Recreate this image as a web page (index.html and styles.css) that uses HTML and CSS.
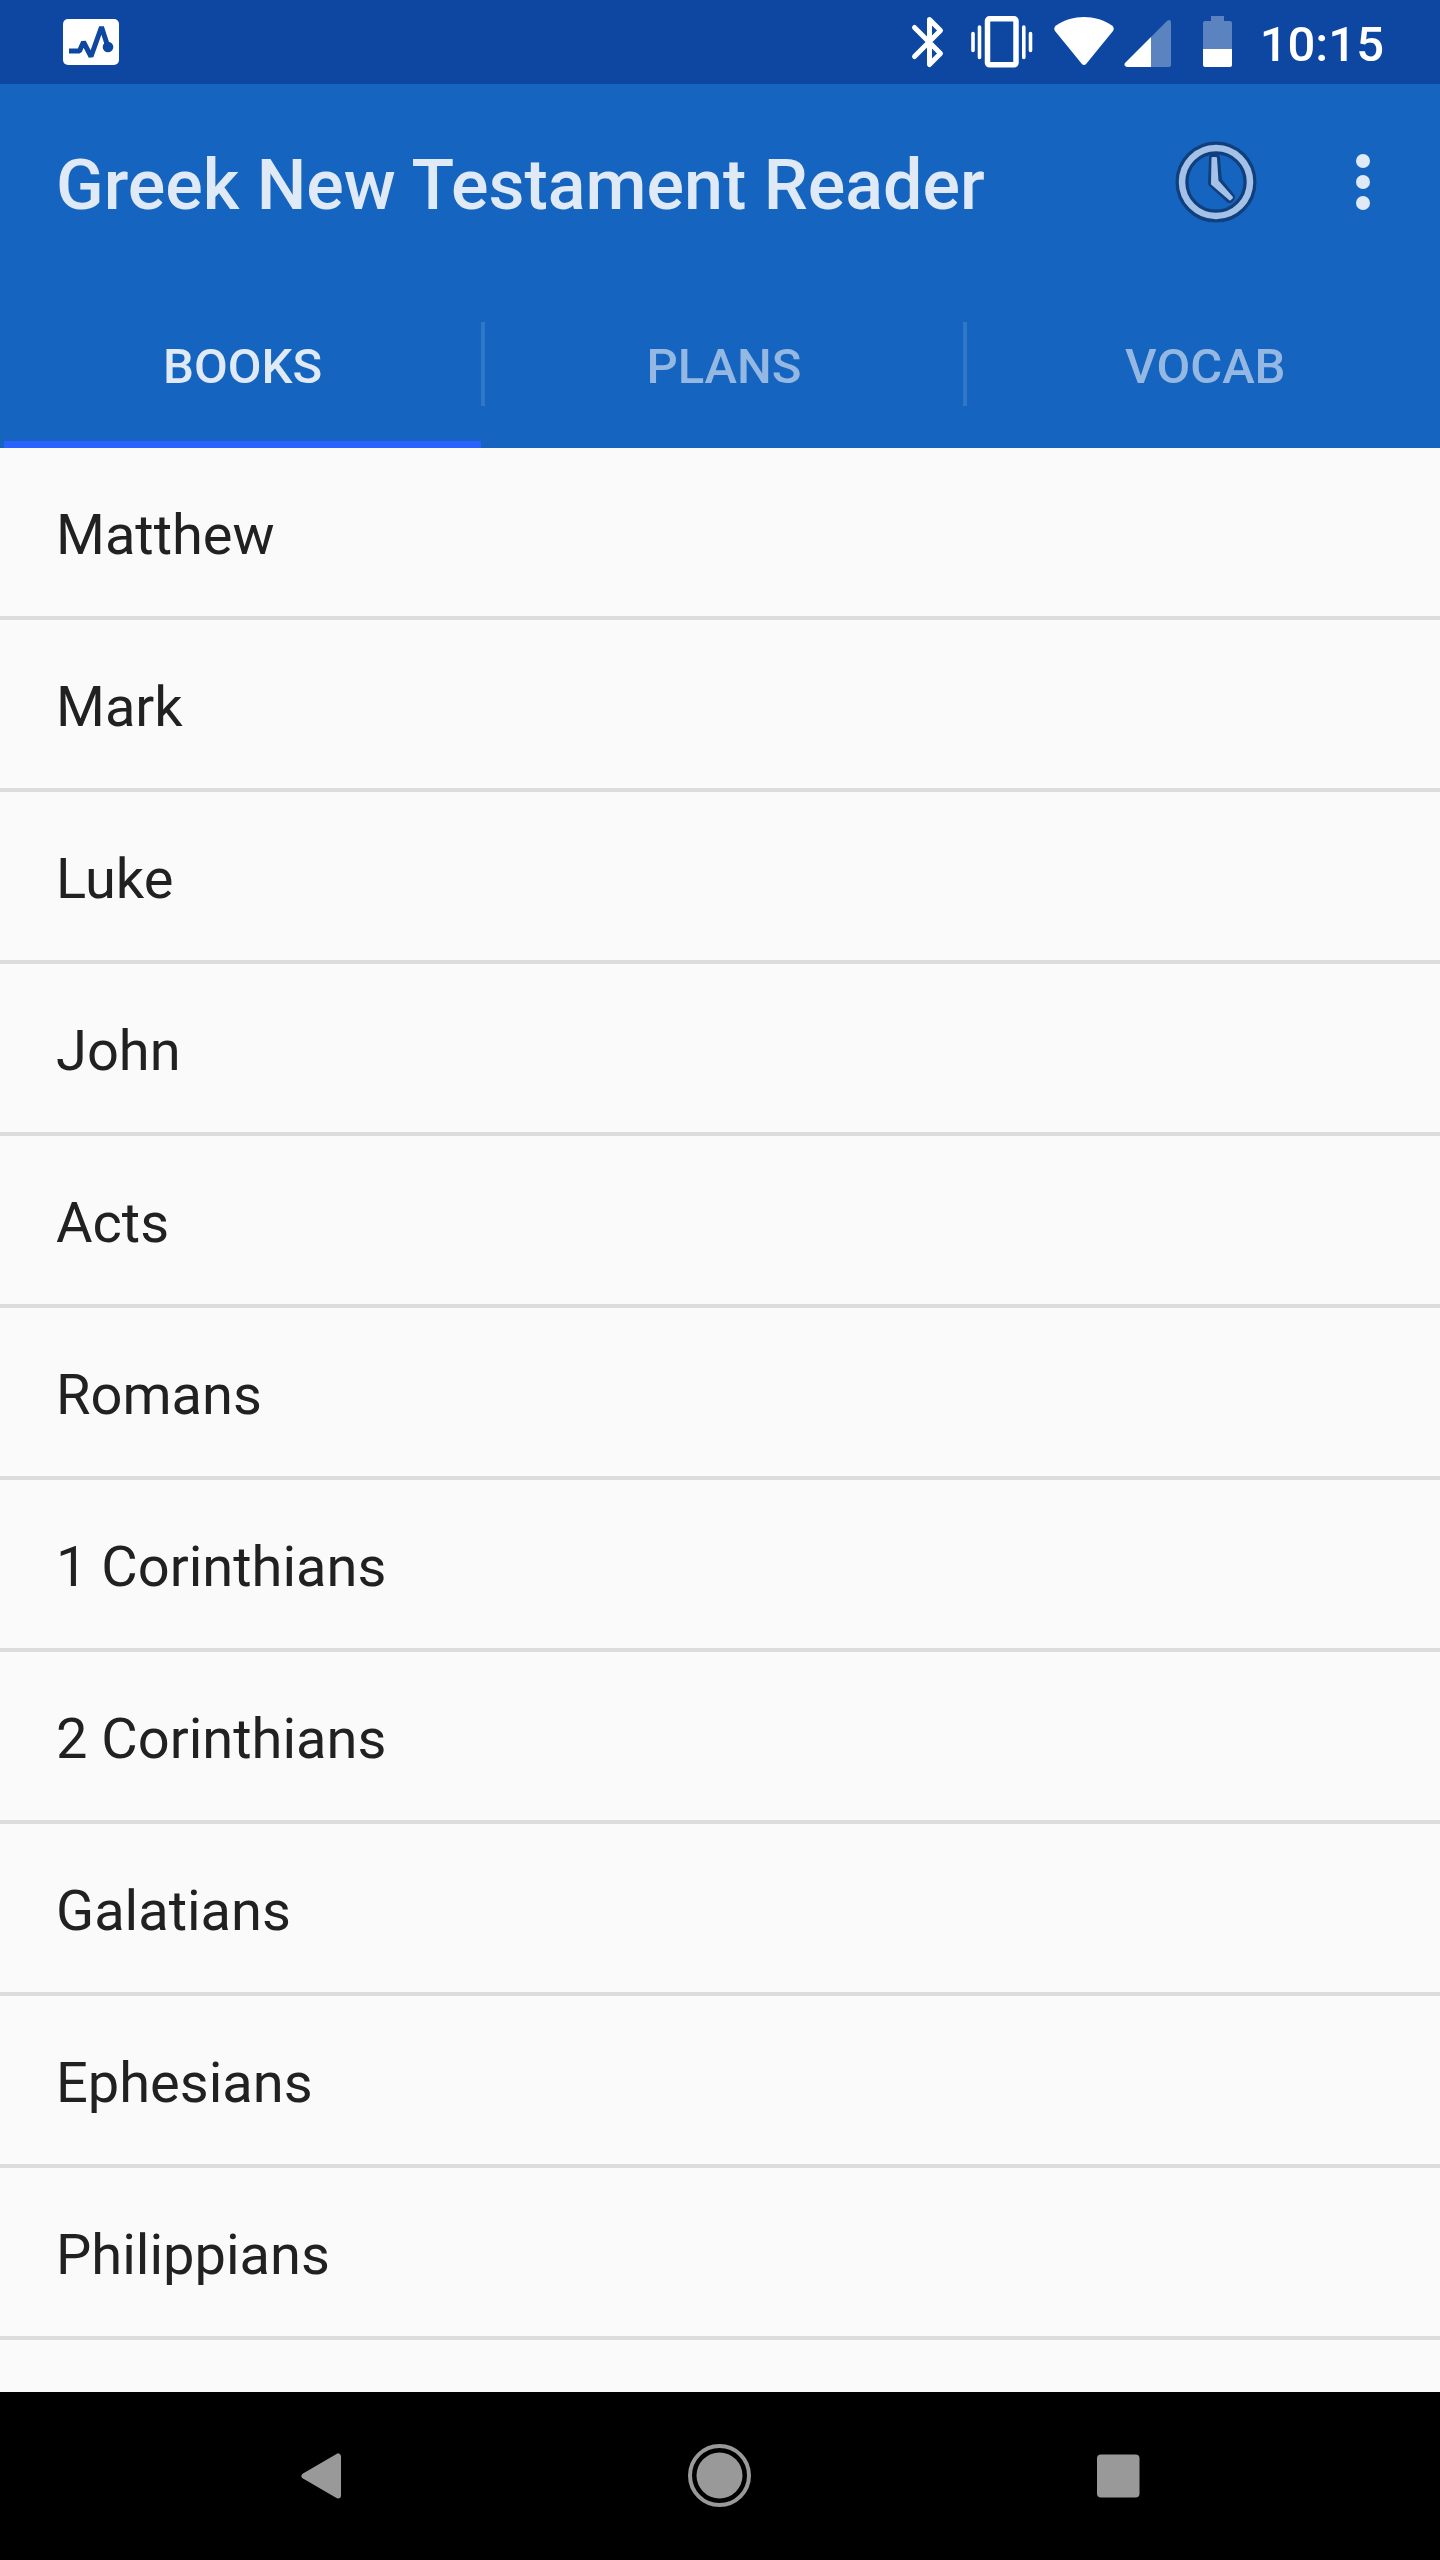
FILE: index.html
```html
<!DOCTYPE html>
<html lang="en">
<head>
<meta charset="utf-8">
<meta name="viewport" content="width=device-width, initial-scale=1">
<title>Greek New Testament Reader</title>
<link rel="stylesheet" href="styles.css">
</head>
<body>
<div class="status-bar">
  <svg class="status-icon" width="56" height="46" viewBox="0 0 56 46" aria-hidden="true">
    <rect width="56" height="46" rx="5" fill="#fff"/>
    <path d="M6 32H16.500L20.500 23L28 37.500L38.500 8L45 28" fill="none" stroke="#0d47a1" stroke-width="5" stroke-linejoin="bevel"/>
    <circle cx="45" cy="28" r="5.300" fill="#0d47a1"/>
  </svg>
  <div class="status-system">
    <svg width="360" height="84" viewBox="0 0 360 84" aria-hidden="true">
      <g fill="none" stroke="#fff" stroke-linecap="round" stroke-linejoin="round">
        <path d="M14.500 27.500L40.500 53.500L29.500 64.500V19.500L40.500 30.500L14.500 56.500" stroke-width="5"/>
        <rect x="87.500" y="18.800" width="28.500" height="46" rx="2" stroke-width="5.500"/>
        <path d="M73 33.500V50.500M79.500 27V57.500M123.800 27V57.500M130.500 33.500V50.500" stroke-width="3.600"/>
      </g>
      <path d="M156 25.500C173 14.300 195 14.300 212 25.500Q215 28 213 31L186.500 63.500Q184 66.500 181.500 63.500L155 31Q153 28 156 25.500Z" fill="#fff"/>
      <path d="M251 37V67H227Q223 65.500 225 63Z" fill="#fff"/>
      <path d="M251 37L267.500 20.500Q271 18.500 271 23V65Q271 67 269 67H251Z" fill="#5a83c0"/>
      <path d="M303 49V23Q303 21 305 21H311V16H324V21H330Q332 21 332 23V49Z" fill="#5a83c0"/>
      <path d="M303 49H332V65Q332 67 330 67H305Q303 67 303 65Z" fill="#fff"/>
    </svg>
    <time class="clock">10:15</time>
  </div>
</div>
<header class="app-bar">
  <h1 class="title">Greek New Testament Reader</h1>
  <button class="action" type="button" aria-label="Recent">
    <svg width="84" height="84" viewBox="0 0 84 84" aria-hidden="true">
      <g fill="none" stroke="#103f7c" stroke-linejoin="round">
        <circle cx="42" cy="42" r="34" stroke-width="13"/>
        <path d="M39 18H42L44 41L57 57L55.500 59L38 43Z" stroke-width="8"/>
      </g>
      <circle cx="42" cy="42" r="34" fill="none" stroke="#a4c2e8" stroke-width="6.500"/>
      <path d="M38.500 18H42L43.500 41L58 57.500L56 59.500L38 44Z" fill="#a4c2e8" stroke="#a4c2e8" stroke-width="2" stroke-linejoin="round"/>
    </svg>
  </button>
  <button class="action" type="button" aria-label="More options">
    <svg width="84" height="84" viewBox="0 0 84 84" fill="#e0eaf6" aria-hidden="true">
      <circle cx="42" cy="21" r="7"/><circle cx="42" cy="42" r="7"/><circle cx="42" cy="63" r="7"/>
    </svg>
  </button>
</header>
<nav class="tabs" role="tablist">
  <button class="tab tab-active" type="button" role="tab" aria-selected="true">BOOKS</button>
  <span class="divider"></span>
  <button class="tab" type="button" role="tab" aria-selected="false">PLANS</button>
  <span class="divider"></span>
  <button class="tab" type="button" role="tab" aria-selected="false">VOCAB</button>
</nav>
<main class="content">
  <ul class="books">
    <li><a class="book" href="#matthew">Matthew</a></li>
    <li><a class="book" href="#mark">Mark</a></li>
    <li><a class="book" href="#luke">Luke</a></li>
    <li><a class="book" href="#john">John</a></li>
    <li><a class="book" href="#acts">Acts</a></li>
    <li><a class="book" href="#romans">Romans</a></li>
    <li><a class="book" href="#1-corinthians">1 Corinthians</a></li>
    <li><a class="book" href="#2-corinthians">2 Corinthians</a></li>
    <li><a class="book" href="#galatians">Galatians</a></li>
    <li><a class="book" href="#ephesians">Ephesians</a></li>
    <li><a class="book" href="#philippians">Philippians</a></li>
  </ul>
</main>
<footer class="nav-bar">
  <button class="nav-key" type="button" aria-label="Back">
    <svg width="84" height="84" viewBox="0 0 84 84" aria-hidden="true">
      <path d="M25.500 42L59 22.500V61.500Z" fill="#999" stroke="#999" stroke-width="6" stroke-linejoin="round"/>
    </svg>
  </button>
  <button class="nav-key" type="button" aria-label="Home">
    <svg width="84" height="84" viewBox="0 0 84 84" aria-hidden="true">
      <circle cx="41.500" cy="41.500" r="23" fill="#999"/>
      <circle cx="41.500" cy="41.500" r="29.500" fill="none" stroke="#999" stroke-width="4"/>
    </svg>
  </button>
  <button class="nav-key" type="button" aria-label="Overview">
    <svg width="84" height="84" viewBox="0 0 84 84" aria-hidden="true">
      <rect x="20" y="20.500" width="42.500" height="43" rx="4" fill="#999"/>
    </svg>
  </button>
</footer>
</body>
</html>
```
FILE: styles.css
```css
* {
  box-sizing: border-box;
}

body {
  display: flex;
  flex-direction: column;
  min-height: 100vh;
  margin: 0;
  background: #fafafa;
  color: #212121;
  font-family: Roboto, "Liberation Sans", sans-serif;
}

button {
  border: 0;
  padding: 0;
  background: none;
  font: inherit;
  cursor: pointer;
}

svg {
  display: block;
}

.status-bar {
  display: flex;
  align-items: center;
  justify-content: space-between;
  height: 84px;
  padding: 0 56px 0 63px;
  background: #0d47a1;
}

.status-system {
  display: flex;
  align-items: center;
}

.clock {
  padding-top: 6px;
  color: #fff;
  font-size: 49px;
  font-weight: 500;
  line-height: 56px;
}

.app-bar {
  display: flex;
  align-items: center;
  height: 196px;
  padding: 0 4px 0 56px;
  background: #1565c0;
}

.title {
  flex: 1;
  margin: 0;
  padding-top: 6px;
  color: #e0eaf6;
  font-size: 70px;
  font-weight: 500;
  line-height: 84px;
}

.action {
  display: grid;
  place-items: center;
  width: 147px;
  height: 168px;
}

.tabs {
  display: flex;
  align-items: center;
  height: 168px;
  padding-left: 4px;
  overflow: hidden;
  background: #1565c0;
}

.tab {
  flex: 1;
  height: 168px;
  padding-top: 6px;
  border-top: 7px solid transparent;
  border-bottom: 7px solid transparent;
  color: #95b8e2;
  font-size: 49px;
  font-weight: 500;
  line-height: 56px;
}

.tab:last-child {
  margin-right: -4px;
}

.tab-active {
  border-bottom-color: #2962ff;
  color: #e0eaf6;
}

.divider {
  width: 4px;
  height: 84px;
  background: #3077c7;
}

.content {
  flex: 1;
}

.books {
  margin: 0;
  padding: 0;
  list-style: none;
}

.book {
  display: block;
  padding: 55px 56px 49px;
  border-bottom: 4px solid #dcdcdc;
  color: inherit;
  font-size: 56px;
  line-height: 64px;
  text-decoration: none;
}

.nav-bar {
  display: flex;
  justify-content: center;
  gap: 119px;
  height: 168px;
  background: #000;
}

.nav-key {
  display: grid;
  place-items: center;
  width: 280px;
}
```
